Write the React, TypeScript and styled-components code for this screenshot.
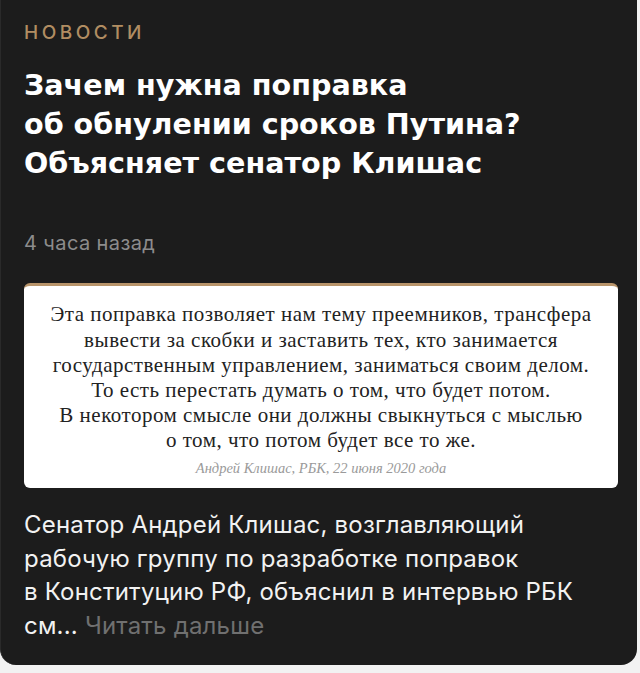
import React from "react";
import styled, { createGlobalStyle } from "styled-components";

const GlobalStyle = createGlobalStyle`
  html, body {
    margin: 0;
    padding: 0;
    background: #f2f2f2;
  }
  body {
    font-family: Inter, "Open Sans", sans-serif;
  }
`;

const Card = styled.article`
  width: 637px;
  box-sizing: border-box;
  background: #1c1c1c;
  border-radius: 0 0 16px 16px;
  border-left: 1px solid #2a2a2a;
  padding: 21px 19px 23px 23px;
`;

const Rubric = styled.div`
  color: #b18d62;
  font-size: 19px;
  line-height: 24px;
  font-weight: 500;
  letter-spacing: 3.5px;
  text-transform: uppercase;
`;

const Title = styled.h1`
  margin: 20.5px 0 0;
  color: #ffffff;
  font-family: "DejaVu Sans", Inter, sans-serif;
  font-size: 28.6px;
  line-height: 39px;
  font-weight: 700;
`;

const Time = styled.div`
  margin-top: 48.5px;
  color: #8c8c8c;
  font-size: 20px;
  line-height: 24px;
  letter-spacing: 0.4px;
`;

const Quote = styled.figure`
  margin: 28px 0 0;
  background: #ffffff;
  border-radius: 6px;
  border-top: 3px solid #b8946a;
  padding: 16.3px 10px 10px;
  text-align: center;
  font-family: "Liberation Serif", "DejaVu Serif", serif;
`;

const QuoteText = styled.blockquote`
  margin: 0;
  color: #222;
  font-size: 21px;
  line-height: 25.2px;
  letter-spacing: 0.5px;
`;

const QuoteSource = styled.figcaption`
  margin-top: 4.5px;
  color: #9a9a9a;
  font-size: 14.5px;
  font-style: italic;
  line-height: 20px;
`;

const Lead = styled.p`
  margin: 20px 0 0;
  color: #f2f2f2;
  font-size: 24px;
  line-height: 33.5px;
  letter-spacing: 0.2px;
`;

const More = styled.span`
  color: #707070;
`;

export default function App() {
  return (
    <>
      <GlobalStyle />
      <Card>
        <Rubric>Новости</Rubric>
        <Title>
          Зачем нужна поправка
          <br />
          об обнулении сроков Путина?
          <br />
          Объясняет сенатор Клишас
        </Title>
        <Time>4 часа назад</Time>
        <Quote>
          <QuoteText>
            Эта поправка позволяет нам тему преемников, трансфера
            <br />
            вывести за скобки и заставить тех, кто занимается
            <br />
            государственным управлением, заниматься своим делом.
            <br />
            То есть перестать думать о том, что будет потом.
            <br />
            В некотором смысле они должны свыкнуться с мыслью
            <br />
            о том, что потом будет все то же.
          </QuoteText>
          <QuoteSource>Андрей Клишас, РБК, 22 июня 2020 года</QuoteSource>
        </Quote>
        <Lead>
          Сенатор Андрей Клишас, возглавляющий
          <br />
          рабочую группу по разработке поправок
          <br />
          в Конституцию РФ, объяснил в интервью РБК
          <br />
          см... <More>Читать дальше</More>
        </Lead>
      </Card>
    </>
  );
}
